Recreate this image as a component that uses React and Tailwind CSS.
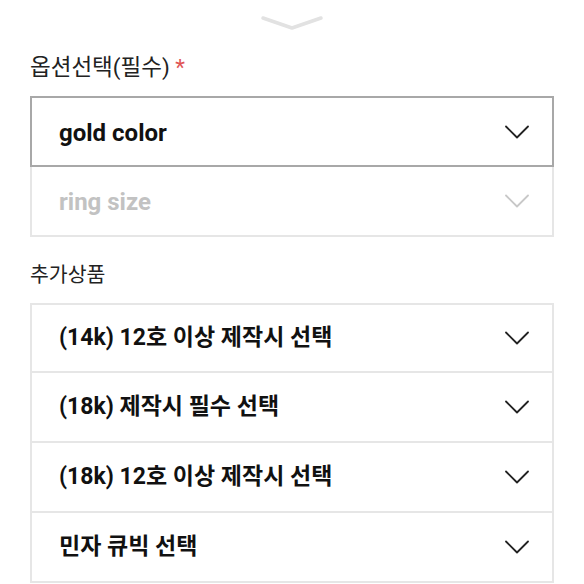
import React from "react";

const Chevron = ({ color = "#222" }) => (
  <svg width="24" height="14" viewBox="0 0 24 14" fill="none">
    <path d="M1 1.5 L12 12.5 L23 1.5" stroke={color} strokeWidth="1.8" strokeLinecap="round" strokeLinejoin="round" />
  </svg>
);

const font = { fontFamily: 'Roboto, "Noto Sans CJK KR", sans-serif' };

export default function App() {
  const items = [
    "(14k) 12호 이상 제작시 선택",
    "(18k) 제작시 필수 선택",
    "(18k) 12호 이상 제작시 선택",
    "민자 큐빅 선택",
  ];
  return (
    <div className="w-[584px] h-[584px] bg-white overflow-hidden" style={font}>
      <div className="flex justify-center pt-[14px] h-[46px]">
        <svg width="64" height="18" viewBox="0 0 64 18" fill="none">
          <path d="M3 4 L32 14 L61 4" stroke="#e2e2e2" strokeWidth="3.5" strokeLinecap="round" strokeLinejoin="round" />
        </svg>
      </div>
      <div className="px-[30px]">
        <div className="text-[22.5px] leading-[26px] text-[#222] pt-[8px] h-[50px]">
          옵션선택(필수) <span className="text-[#e05555]">*</span>
        </div>
        <div className="border-2 border-[#a8a8a8] h-[71px] flex items-center justify-between pl-[27px] pr-[23px]">
          <span className="text-[24px] font-bold text-[#111] pt-[2px]">gold color</span>
          <Chevron color="#222" />
        </div>
        <div className="border-2 border-t-0 border-[#e6e6e6] h-[70px] flex items-center justify-between pl-[27px] pr-[23px]">
          <span className="text-[24px] font-bold text-[#c2c2c2] pt-[2px]">ring size</span>
          <Chevron color="#c8c8c8" />
        </div>
        <div className="text-[20.5px] leading-[24px] text-[#222] pt-[26px] h-[66px]">추가상품</div>
        {items.map((t, i) => (
          <div
            key={i}
            className={`border-2 border-[#e6e6e6] ${i > 0 ? "border-t-0" : ""} h-[70px] flex items-center justify-between pl-[27px] pr-[23px]`}
          >
            <span className="text-[23px] font-bold text-[#111]">{t}</span>
            <Chevron color="#222" />
          </div>
        ))}
      </div>
    </div>
  );
}
